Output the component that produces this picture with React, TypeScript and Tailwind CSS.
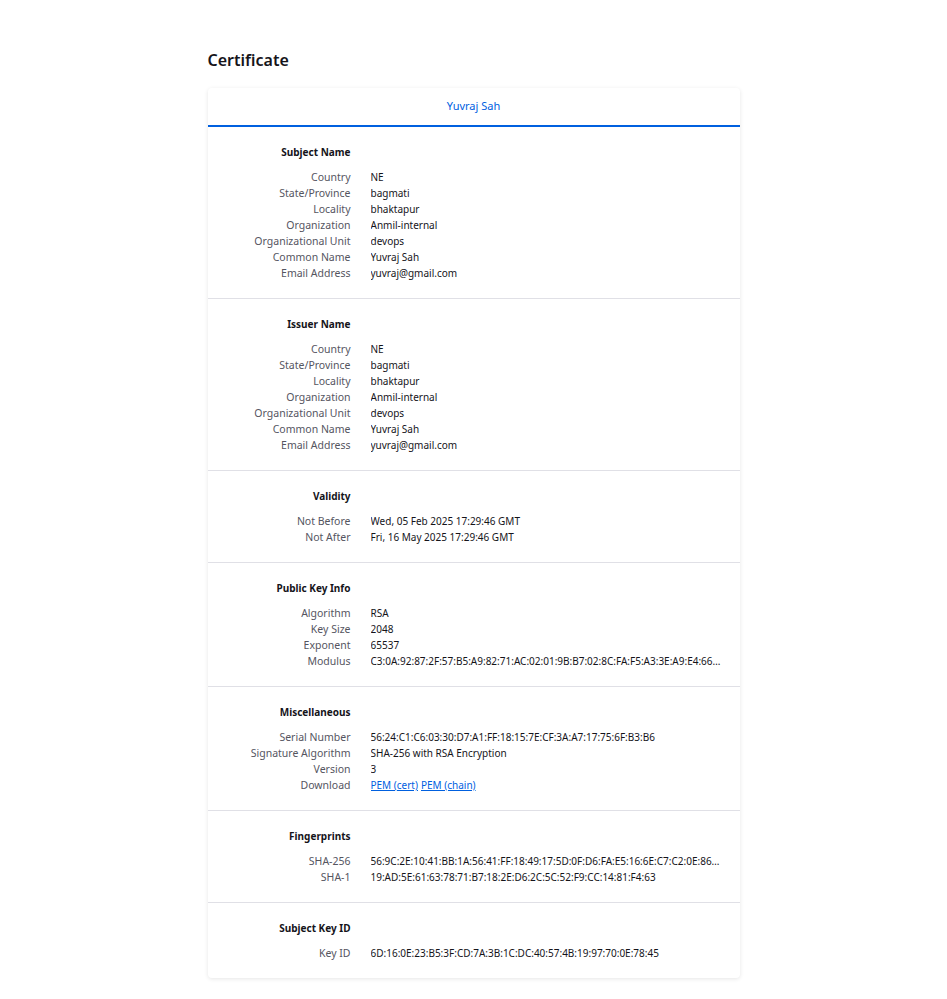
type Row = { label: string; value: string; links?: string[] };
type Section = { title: string; rows: Row[] };

const nameRows: Row[] = [
  { label: "Country", value: "NE" },
  { label: "State/Province", value: "bagmati" },
  { label: "Locality", value: "bhaktapur" },
  { label: "Organization", value: "Anmil-internal" },
  { label: "Organizational Unit", value: "devops" },
  { label: "Common Name", value: "Yuvraj Sah" },
  { label: "Email Address", value: "yuvraj@gmail.com" },
];

const sections: Section[] = [
  { title: "Subject Name", rows: nameRows },
  { title: "Issuer Name", rows: nameRows },
  {
    title: "Validity",
    rows: [
      { label: "Not Before", value: "Wed, 05 Feb 2025 17:29:46 GMT" },
      { label: "Not After", value: "Fri, 16 May 2025 17:29:46 GMT" },
    ],
  },
  {
    title: "Public Key Info",
    rows: [
      { label: "Algorithm", value: "RSA" },
      { label: "Key Size", value: "2048" },
      { label: "Exponent", value: "65537" },
      {
        label: "Modulus",
        value:
          "C3:0A:92:87:2F:57:B5:A9:82:71:AC:02:01:9B:B7:02:8C:FA:F5:A3:3E:A9:E4:66:1D:7B:90:2A:C1:45:09:33",
      },
    ],
  },
  {
    title: "Miscellaneous",
    rows: [
      { label: "Serial Number", value: "56:24:C1:C6:03:30:D7:A1:FF:18:15:7E:CF:3A:A7:17:75:6F:B3:B6" },
      { label: "Signature Algorithm", value: "SHA-256 with RSA Encryption" },
      { label: "Version", value: "3" },
      { label: "Download", value: "", links: ["PEM (cert)", "PEM (chain)"] },
    ],
  },
  {
    title: "Fingerprints",
    rows: [
      {
        label: "SHA-256",
        value:
          "56:9C:2E:10:41:BB:1A:56:41:FF:18:49:17:5D:0F:D6:FA:E5:16:6E:C7:C2:0E:86:3A:91:4C:22:7E:0B:11:D4",
      },
      { label: "SHA-1", value: "19:AD:5E:61:63:78:71:B7:18:2E:D6:2C:5C:52:F9:CC:14:81:F4:63" },
    ],
  },
  {
    title: "Subject Key ID",
    rows: [{ label: "Key ID", value: "6D:16:0E:23:B5:3F:CD:7A:3B:1C:DC:40:57:4B:19:97:70:0E:78:45" }],
  },
];

function CertSection({ section, last }: { section: Section; last: boolean }) {
  return (
    <div className={`pt-[17px] pb-[17px] ${last ? "" : "border-b border-[#e0e0e6]"}`}>
      <div className="flex h-4 items-center">
        <div className="w-[143px] text-right text-[10px] font-bold text-[#15141a]">{section.title}</div>
      </div>
      <div className="mt-[9px]">
        {section.rows.map((r) => (
          <div key={r.label} className="flex h-4 items-baseline gap-5 leading-4">
            <div className="w-[143px] shrink-0 text-right text-[10.5px] text-[#55555f]">{r.label}</div>
            <div className="w-[350px] truncate text-[10px] text-[#15141a]">
              {r.links ? (
                <span className="flex gap-[3px]">
                  {r.links.map((l) => (
                    <a key={l} href="#" className="text-[#0060df] underline">
                      {l}
                    </a>
                  ))}
                </span>
              ) : (
                r.value
              )}
            </div>
          </div>
        ))}
      </div>
    </div>
  );
}

export default function App() {
  return (
    <div className="min-h-screen bg-white font-['Noto_Sans',sans-serif] text-[#15141a]">
      <div className="mx-auto w-[532px] pt-[48px] pb-5">
        <h1 className="text-[16px] leading-6 font-semibold">Certificate</h1>
        <div className="mt-[16px] rounded-[4px] bg-white shadow-[0_1px_4px_rgba(12,12,13,0.1)]">
          <div className="flex h-[39px] items-center justify-center border-b-2 border-[#0060df] text-[11px] text-[#0060df]">
            Yuvraj Sah
          </div>
          {sections.map((s, i) => (
            <CertSection key={s.title} section={s} last={i === sections.length - 1} />
          ))}
        </div>
      </div>
    </div>
  );
}
